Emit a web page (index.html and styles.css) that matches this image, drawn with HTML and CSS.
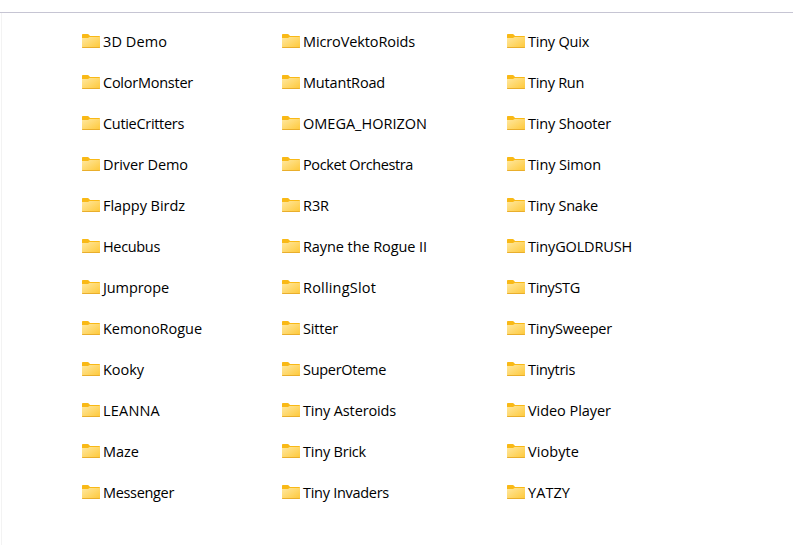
FILE: index.html
```html
<!DOCTYPE html>
<html lang="en">
<head>
<meta charset="utf-8">
<title>Folders</title>
<link rel="stylesheet" href="styles.css">
</head>
<body>
<svg class="defs" width="0" height="0" aria-hidden="true">
  <defs>
    <linearGradient id="front" x1="0" y1="0" x2="1" y2="1">
      <stop offset="0" stop-color="#ffe8a0"/>
      <stop offset="1" stop-color="#fec838"/>
    </linearGradient>
    <symbol id="folder" viewBox="0 0 18 14">
      <path d="M0 .8Q0 0 .8 0H5.6Q6.3 0 6.8.6L8 2H17.2Q18 2 18 2.7V6H0Z" fill="#f9b916"/>
      <path d="M0 4H6L7.6 3H18V13.3Q18 14 17.2 14H.8Q0 14 0 13.3Z" fill="url(#front)"/>
      <path d="M0 13H18V13.3Q18 14 17.2 14H.8Q0 14 0 13.3Z" fill="#e9ae2c"/>
    </symbol>
  </defs>
</svg>
<div class="toolbar"></div>
<main class="files" id="files"></main>
<script src="files.js"></script>
</body>
</html>
```
FILE: styles.css
```css
* { box-sizing: border-box; }
body {
  margin: 0;
  height: 545px;
  overflow: hidden;
  display: flex;
  flex-direction: column;
  background: #fff;
  color: #000;
  font-family: "Segoe UI", "Open Sans", sans-serif;
  font-size: 14.5px;
}
.defs { position: absolute; }
.toolbar { height: 13px; flex: none; border-bottom: 1px solid #c6c5d3; }
.files {
  flex: 1;
  margin-left: 1px;
  border-left: 1px solid #f3f3f3;
  padding: 8px 0 0 80px;
  display: grid;
  grid-template-columns: 200px 225px 200px;
  grid-template-rows: repeat(12, 41px);
  grid-auto-flow: column;
}
.file { display: flex; align-items: center; gap: 3px; white-space: nowrap; }
.icon { width: 18px; height: 14px; flex: none; display: block; margin-bottom: 1px; }
.name { line-height: 20px; }
```
FILE: files.js
```js
// Folder names with the width of each label in pixels.
const folders = [
  ["3D Demo", 64], ["ColorMonster", 90], ["CutieCritters", 81], ["Driver Demo", 85],
  ["Flappy Birdz", 82], ["Hecubus", 57], ["Jumprope", 66], ["KemonoRogue", 99],
  ["Kooky", 41], ["LEANNA", 57], ["Maze", 36], ["Messenger", 71],
  ["MicroVektoRoids", 112], ["MutantRoad", 82], ["OMEGA_HORIZON", 124], ["Pocket Orchestra", 110],
  ["R3R", 26], ["Rayne the Rogue II", 124], ["RollingSlot", 73], ["Sitter", 35],
  ["SuperOteme", 83], ["Tiny Asteroids", 93], ["Tiny Brick", 63], ["Tiny Invaders", 86],
  ["Tiny Quix", 61], ["Tiny Run", 56], ["Tiny Shooter", 83], ["Tiny Simon", 73],
  ["Tiny Snake", 70], ["TinyGOLDRUSH", 104], ["TinySTG", 52], ["TinySweeper", 84],
  ["Tinytris", 47], ["Video Player", 83], ["Viobyte", 51], ["YATZY", 42]
];
const list = document.getElementById("files");
for (const [label, width] of folders) {
  const row = document.createElement("div");
  row.className = "file";
  row.innerHTML = '<svg class="icon"><use href="#folder"/></svg><span class="name"></span>';
  const name = row.lastChild;
  name.textContent = label;
  list.append(row);
  const spare = width - name.getBoundingClientRect().width;
  name.style.letterSpacing = (spare / label.length).toFixed(3) + "px";
}
```
